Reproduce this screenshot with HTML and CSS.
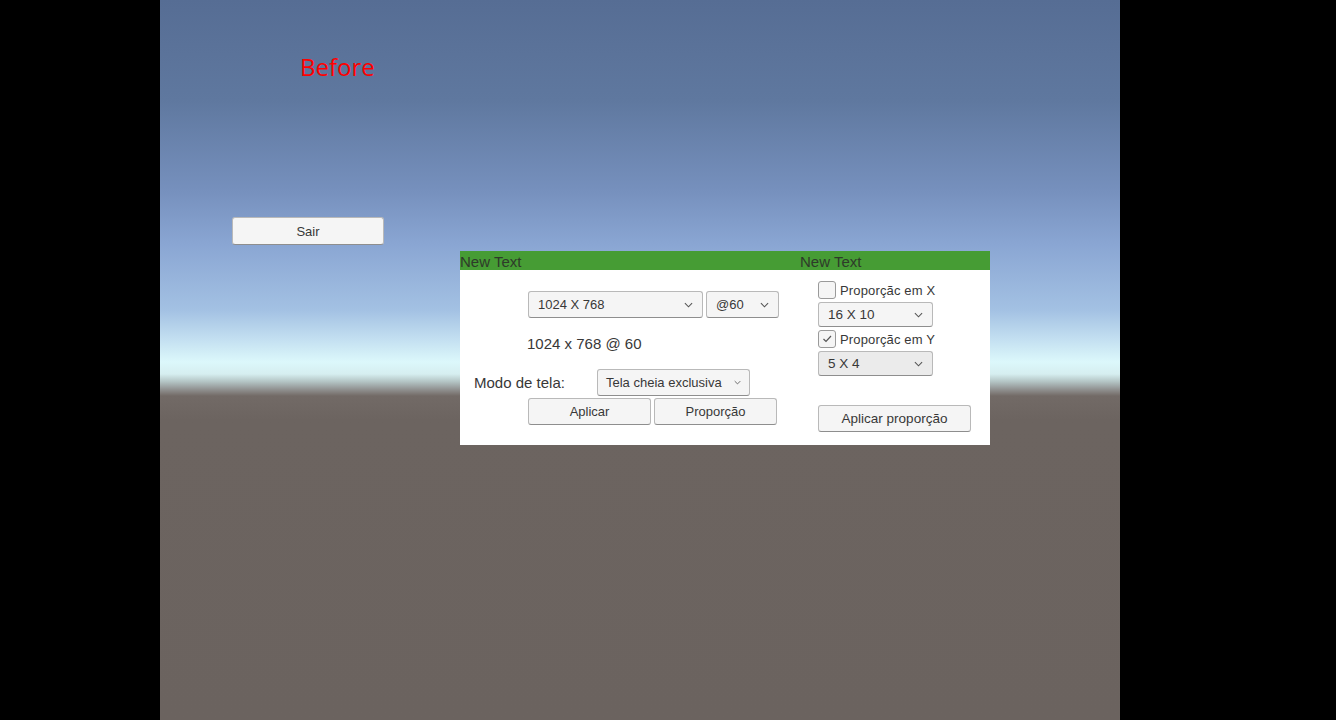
FILE: index.html
```html
<!DOCTYPE html>
<html lang="pt">
<head>
    <meta charset="UTF-8">
    <meta name="viewport" content="width=device-width, initial-scale=1.0">
    <title>Before</title>
    <link rel="stylesheet" href="styles.css">
</head>
<body>
    <div class="game-view">
        <div class="before-label">Before</div>

        <button class="ui-button sair-button">Sair</button>

        <div class="settings-panel">
            <div class="panel-header">
                <span>New Text</span>
                <span>New Text</span>
            </div>

            <div class="panel-body">
                <!-- Resolution column -->
                <div class="resolution-column">
                    <div class="resolution-row">
                        <div class="ui-dropdown res-dropdown">
                            <span>1024 X 768</span>
                            <svg class="chevron" viewBox="0 0 10 6"><path d="M1 1 L5 5 L9 1"/></svg>
                        </div>
                        <div class="ui-dropdown rate-dropdown">
                            <span>@60</span>
                            <svg class="chevron" viewBox="0 0 10 6"><path d="M1 1 L5 5 L9 1"/></svg>
                        </div>
                    </div>

                    <div class="current-resolution">1024 x 768 @ 60</div>

                    <div class="mode-row">
                        <span class="mode-label">Modo de tela:</span>
                        <div class="ui-dropdown mode-dropdown">
                            <span>Tela cheia exclusiva</span>
                            <svg class="chevron small" viewBox="0 0 10 6"><path d="M1 1 L5 5 L9 1"/></svg>
                        </div>
                    </div>

                    <div class="button-row">
                        <button class="ui-button">Aplicar</button>
                        <button class="ui-button">Proporção</button>
                    </div>
                </div>

                <!-- Aspect ratio column -->
                <div class="aspect-column">
                    <label class="ui-toggle">
                        <span class="checkbox"></span>
                        <span>Proporçãc em X</span>
                    </label>
                    <div class="ui-dropdown aspect-dropdown">
                        <span>16 X 10</span>
                        <svg class="chevron" viewBox="0 0 10 6"><path d="M1 1 L5 5 L9 1"/></svg>
                    </div>
                    <label class="ui-toggle">
                        <span class="checkbox">
                            <svg viewBox="0 0 12 12"><path d="M2.5 6 L5 8.5 L10 3"/></svg>
                        </span>
                        <span>Proporçãc em Y</span>
                    </label>
                    <div class="ui-dropdown aspect-dropdown disabled">
                        <span>5 X 4</span>
                        <svg class="chevron" viewBox="0 0 10 6"><path d="M1 1 L5 5 L9 1"/></svg>
                    </div>
                    <button class="ui-button apply-aspect">Aplicar proporção</button>
                </div>
            </div>
        </div>
    </div>
</body>
</html>
```

FILE: styles.css
```css
:root {
    --text-color: #383838;
    --control-bg: #f5f5f5;
    --control-border: #b9b9b9;
    --header-green: #469c34;
}

body {
    margin: 0;
    padding: 0;
    background-color: #000;
    font-family: 'Liberation Sans', Arial, sans-serif;
    color: var(--text-color);
    overflow: hidden;
}

/* Game view: 960px wide between black bars */
.game-view {
    position: relative;
    width: 960px;
    height: 720px;
    margin: 0 auto 0 160px;
    background: linear-gradient(to bottom,
        #566d94 0px,
        #5f789f 100px,
        #7690bd 190px,
        #8aa6d3 245px,
        #a3c1e3 310px,
        #c4e0f1 340px,
        #dcf8fb 362px,
        #d6eef0 374px,
        #b2c2c2 382px,
        #8e8e8d 390px,
        #726a66 396px,
        #6c6460 420px,
        #6b635f 720px);
}

.before-label {
    position: absolute;
    left: 140px;
    top: 50px;
    font-family: 'Open Sans', 'Noto Sans', sans-serif;
    font-size: 24px;
    color: #ff0000;
}

/* Generic unity-like controls */
.ui-button {
    display: flex;
    align-items: center;
    justify-content: center;
    height: 27px;
    padding: 0;
    background-color: var(--control-bg);
    border: 1px solid var(--control-border);
    border-bottom-color: #8e8e8e;
    border-radius: 3px;
    font-family: 'Liberation Sans', Arial, sans-serif;
    font-size: 13px;
    color: var(--text-color);
    box-sizing: border-box;
}

.ui-dropdown {
    display: flex;
    align-items: center;
    justify-content: space-between;
    height: 27px;
    padding: 0 9px 0 9px;
    background-color: var(--control-bg);
    border: 1px solid var(--control-border);
    border-bottom-color: #8e8e8e;
    border-radius: 3px;
    font-size: 13px;
    box-sizing: border-box;
}

.chevron {
    width: 9px;
    height: 6px;
    fill: none;
    stroke: #555;
    stroke-width: 1.2;
}

.chevron.small {
    width: 7px;
    height: 5px;
}

.sair-button {
    position: absolute;
    left: 72px;
    top: 217px;
    width: 152px;
    height: 28px;
}

/* Settings panel */
.settings-panel {
    position: absolute;
    left: 300px;
    top: 251px;
    width: 530px;
    height: 194px;
    background-color: #ffffff;
}

.panel-header {
    display: grid;
    grid-template-columns: 340px 1fr;
    height: 19px;
    line-height: 21px;
    background-color: var(--header-green);
    font-size: 15px;
    color: #2e3a2a;
}

.panel-body {
    display: grid;
    grid-template-columns: 340px 1fr;
}

.resolution-column {
    display: flex;
    flex-direction: column;
}

.resolution-row {
    display: flex;
    gap: 3px;
    margin: 21px 0 0 68px;
}

.res-dropdown {
    width: 175px;
}

.rate-dropdown {
    width: 73px;
}

.current-resolution {
    margin: 16px 0 0 67px;
    font-size: 15px;
    line-height: 20px;
}

.mode-row {
    display: flex;
    align-items: center;
    margin: 15px 0 0 14px;
}

.mode-label {
    width: 123px;
    font-size: 15px;
}

.mode-dropdown {
    width: 153px;
    padding: 0 8px;
}

.button-row {
    display: flex;
    gap: 3px;
    margin: 2px 0 0 68px;
}

.button-row .ui-button {
    width: 123px;
}

.aspect-column {
    display: flex;
    flex-direction: column;
    align-items: flex-start;
    padding: 11px 0 0 18px;
}

.ui-toggle {
    display: flex;
    align-items: center;
    gap: 4px;
    height: 18px;
    font-size: 13px;
    letter-spacing: 0.15px;
}

.checkbox {
    display: flex;
    align-items: center;
    justify-content: center;
    width: 18px;
    height: 18px;
    background-color: var(--control-bg);
    border: 1px solid #9a9a9a;
    border-radius: 3px;
    box-sizing: border-box;
}

.checkbox svg {
    width: 12px;
    height: 12px;
    fill: none;
    stroke: #555;
    stroke-width: 1.2;
}

.aspect-dropdown {
    width: 115px;
    height: 25px;
    margin: 3px 0;
    font-size: 13.5px;
}

.aspect-dropdown.disabled {
    background-color: #ebebeb;
}

.apply-aspect {
    width: 153px;
    height: 27px;
    margin-top: 26px;
    font-size: 13.5px;
}
```
